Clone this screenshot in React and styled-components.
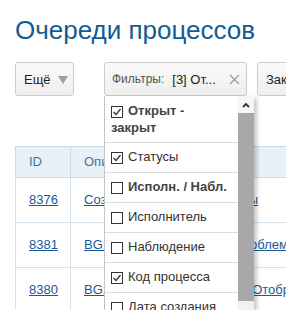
import React from "react"
import styled, {createGlobalStyle} from "styled-components"

const GlobalStyle = createGlobalStyle`
    html, body {
        margin: 0;
        padding: 0;
        background: #fff;
        overflow: hidden;
    }
    body {
        font-family: "Liberation Sans", Arial, sans-serif;
        font-size: 13px;
        color: #222;
    }
`

const Page = styled.div`
    padding-left: 15px;
    width: 600px;
`

const Title = styled.h1`
    margin: 15px 0 0 0;
    font-size: 26px;
    line-height: 30px;
    font-weight: normal;
    color: #135c93;
    white-space: nowrap;
`

const Toolbar = styled.div`
    display: flex;
    align-items: flex-start;
    margin-top: 17px;
    height: 34px;
`

const Button = styled.div`
    box-sizing: border-box;
    height: 34px;
    display: flex;
    align-items: center;
    gap: ${p => p.$gap ?? 7}px;
    padding: 0 ${p => p.$padRight || 8}px 0 ${p => p.$padLeft || 8}px;
    width: ${p => p.$width ? p.$width + "px" : "auto"};
    margin-left: ${p => p.$offset || 0}px;
    border: 1px solid #cbcbcb;
    border-radius: 3px;
    background: linear-gradient(#fafafa, #eeeeee);
    white-space: nowrap;
    color: #1e1e1e;
    flex-shrink: 0;
`

const Caret = styled.span`
    width: 0;
    height: 0;
    border-left: 5px solid transparent;
    border-right: 5px solid transparent;
    border-top: 8px solid #a0a0a0;
    margin-top: 1px;
`

const FilterWrap = styled.div`
    position: relative;
    margin-left: 30px;
    flex-shrink: 0;
`

const Muted = styled.span`
    color: #555;
    font-size: 12px;
    margin-right: 8px;
`

const Close = styled.svg`
    margin-left: auto;
    display: block;
`

const Dropdown = styled.div`
    position: absolute;
    top: 100%;
    left: 0;
    z-index: 5;
    width: 150px;
    height: 240px;
    box-sizing: border-box;
    display: flex;
    background: #fff;
    border-left: 1px solid #c4c4c4;
    box-shadow: 3px 2px 4px rgba(0, 0, 0, 0.22);
    overflow: hidden;
`

const List = styled.div`
    flex: 1;
    min-width: 0;
    padding-top: 1px;
`

const Item = styled.div`
    padding: 5px 7px 6px 6px;
    line-height: ${p => p.$tight ? 17 : 18}px;
    border-bottom: 1px solid #dcdcdc;
    font-weight: ${p => p.$bold ? "bold" : "normal"};
    color: ${p => p.$bold ? "#444" : "#333"};
    white-space: ${p => p.$wrap ? "normal" : "nowrap"};
`

const Box = styled.span`
    display: inline-block;
    box-sizing: border-box;
    width: 12px;
    height: 12px;
    border: 1px solid #333;
    background: #fff;
    vertical-align: -3px;
    margin-right: 5px;
    position: relative;

    svg {
        position: absolute;
        left: 0;
        top: 0;
    }
`

const Scroll = styled.div`
    width: 16px;
    flex-shrink: 0;
    display: flex;
    flex-direction: column;
    background: #f1f1f1;
`

const ScrollArrow = styled.div`
    height: 17px;
    display: flex;
    align-items: center;
    justify-content: center;
    background: #f6f6f6;
`

const Thumb = styled.div`
    height: 188px;
    background: #a8a8a8;
`

const Table = styled.table`
    margin-top: 50px;
    border-collapse: collapse;
    white-space: nowrap;
`

const Th = styled.th`
    background: #e8f1f8;
    border: 1px solid #c9dcec;
    color: #3f74a6;
    font-weight: normal;
    text-align: left;
    padding: 6px 9px 6px 13px;
    line-height: 18px;
    width: ${p => p.$w ? p.$w + "px" : "auto"};
    box-sizing: border-box;
`

const Td = styled.td`
    border: 1px solid #d3e2ef;
    padding: 13px 9px 13px 13px;
    line-height: 18px;
`

const Link = styled.a`
    color: #1a5a96;
    text-decoration: underline;
`

const Check = ({on}) => (
    <Box>
        {on && (
            <svg width="10" height="10" viewBox="0 0 10 10">
                <polyline points="1.5,5 4,7.5 8.5,2" fill="none" stroke="#333" strokeWidth="1.2"/>
            </svg>
        )}
    </Box>
)

const items = [
    {label: "Открыт - закрыт", on: true, bold: true, tight: true, wrap: true},
    {label: "Статусы", on: true},
    {label: "Исполн. / Набл.", on: false, bold: true},
    {label: "Исполнитель", on: false},
    {label: "Наблюдение", on: false},
    {label: "Код процесса", on: true},
    {label: "Дата создания", on: false},
    {label: "Дата закрытия", on: false},
]

const rows = [
    {id: "8376", name: "Создание временной группы"},
    {id: "8381", name: "BG: Решение серьёзных проблем"},
    {id: "8380", name: "BG: Ошибка в модулях при Отображении"},
]

export default function App() {
    return (
        <>
            <GlobalStyle/>
            <Page>
                <Title>Очереди процессов</Title>
                <Toolbar>
                    <Button $width={59}>Ещё <Caret/></Button>
                    <FilterWrap>
                        <Button $width={143} $padLeft={7} $padRight={6} $gap={0}>
                            <Muted>Фильтры:</Muted>[3] От...
                            <Close width="11" height="11" viewBox="0 0 11 11">
                                <path d="M1 1 L10 10 M10 1 L1 10" stroke="#9a9a9a" strokeWidth="1.2"/>
                            </Close>
                        </Button>
                        <Dropdown>
                            <List>
                                {items.map(item => (
                                    <Item key={item.label} $bold={item.bold} $tight={item.tight} $wrap={item.wrap}>
                                        <Check on={item.on}/>{item.label}
                                    </Item>
                                ))}
                            </List>
                            <Scroll>
                                <ScrollArrow>
                                    <svg width="8" height="6" viewBox="0 0 8 6">
                                        <polyline points="1,5 4,2 7,5" fill="none" stroke="#333" strokeWidth="1.8"/>
                                    </svg>
                                </ScrollArrow>
                                <Thumb/>
                            </Scroll>
                        </Dropdown>
                    </FilterWrap>
                    <Button $offset={10} $padLeft={8}>Закрыть</Button>
                </Toolbar>
                <Table>
                    <thead>
                    <tr>
                        <Th $w={55}>ID</Th>
                        <Th>Описание</Th>
                        <Th>Статус</Th>
                    </tr>
                    </thead>
                    <tbody>
                    {rows.map(row => (
                        <tr key={row.id}>
                            <Td><Link>{row.id}</Link></Td>
                            <Td><Link>{row.name}</Link></Td>
                            <Td>Открыт</Td>
                        </tr>
                    ))}
                    </tbody>
                </Table>
            </Page>
        </>
    )
}
